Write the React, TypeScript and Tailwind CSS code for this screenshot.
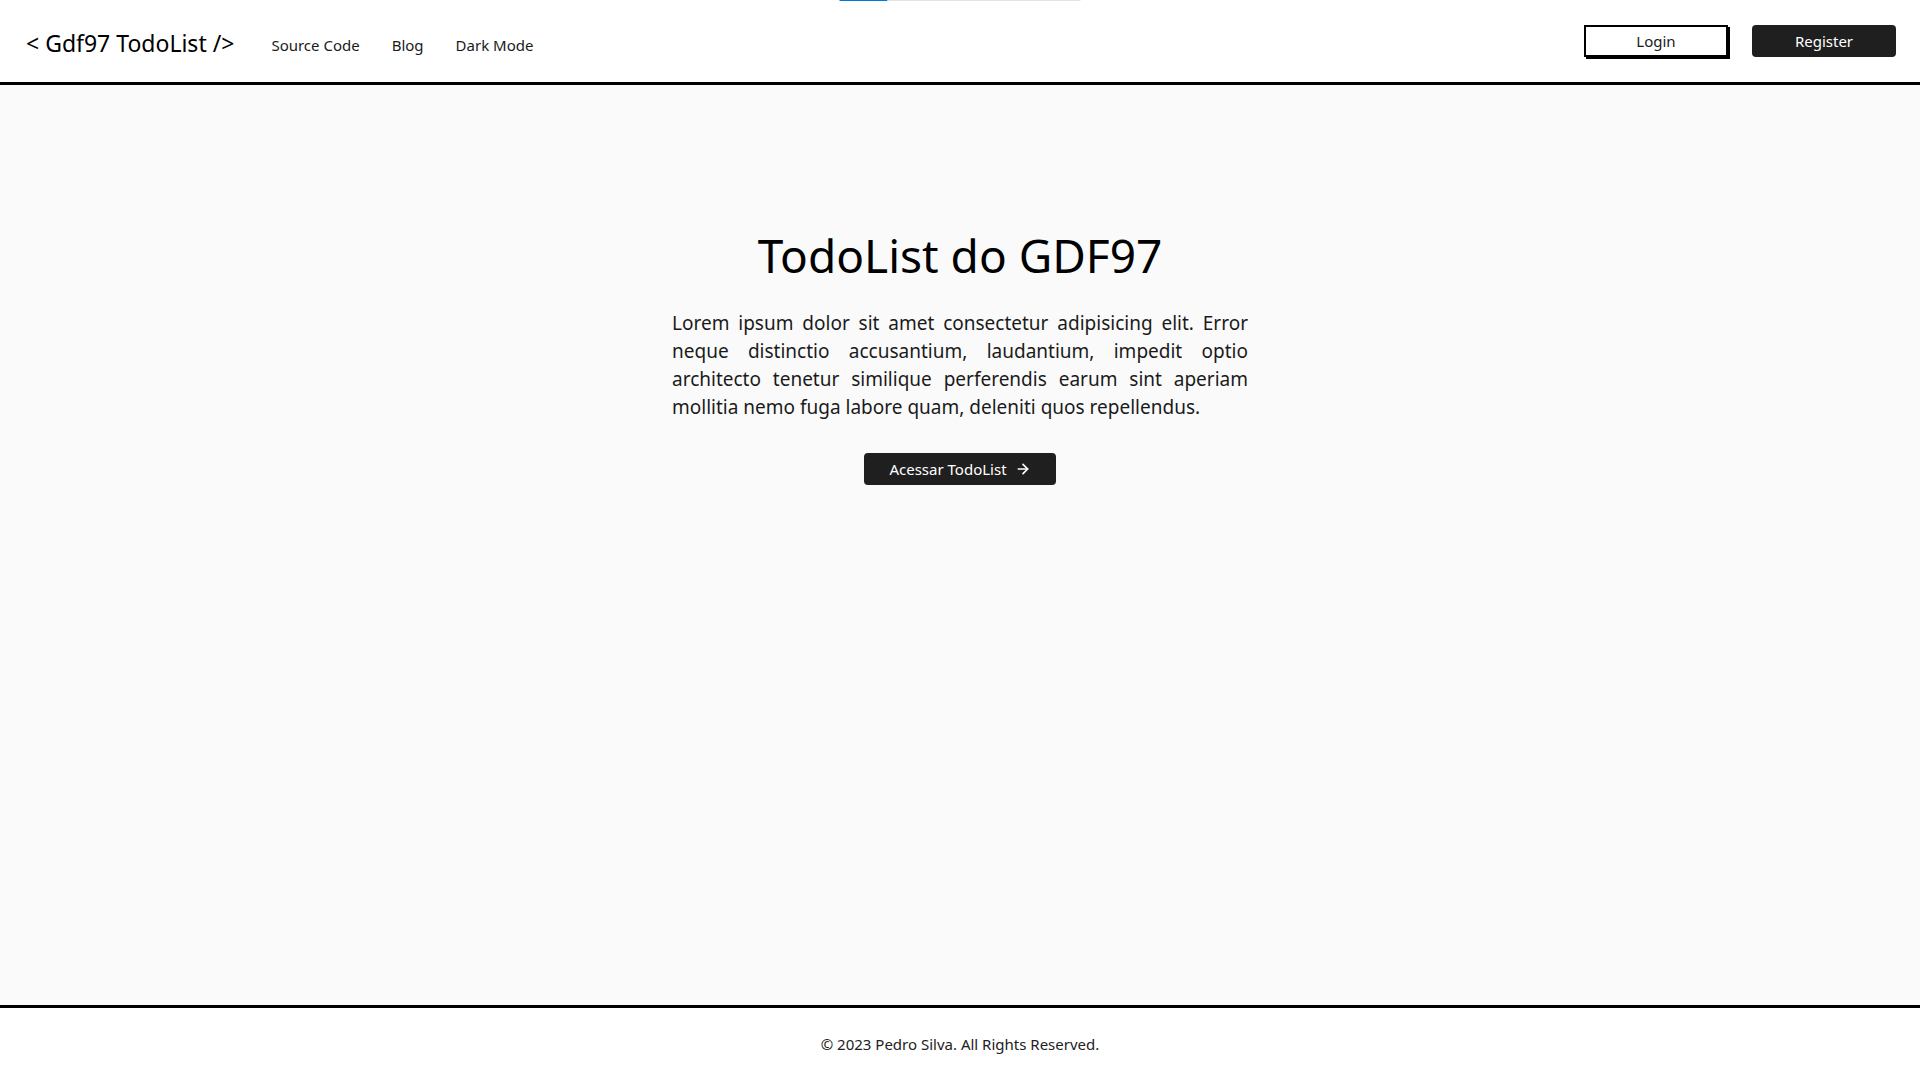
import React from "react";
import { ArrowRight } from "lucide-react";

export default function App() {
  return (
    <div className="relative flex min-h-screen w-[1920px] flex-col bg-white text-[#111] font-['Noto_Sans','Open_Sans',sans-serif]">
      <div className="absolute left-1/2 top-0 flex h-[1px] w-[241px] -translate-x-1/2">
        <div className="h-full w-[48px] bg-[#0078d4]" />
        <div className="h-full flex-1 bg-[#e3e3e3]" />
      </div>

      <header className="flex h-[85px] items-center justify-between border-b-[3px] border-black bg-white px-6">
        <div className="mt-[4px] flex items-baseline">
          <span className="pl-[2px] text-[23px] leading-8 text-black">&lt; Gdf97 TodoList /&gt;</span>
          <nav className="ml-[37px] flex -translate-y-px items-baseline gap-8 text-[15px] text-[#1a1a1a]">
            <a href="#">Source Code</a>
            <a href="#">Blog</a>
            <a href="#">Dark Mode</a>
          </nav>
        </div>
        <div className="flex items-center gap-6">
          <button className="h-8 w-36 border-2 border-black bg-white text-[15px] text-[#1a1a1a] shadow-[2px_2px_0_0_#000]">
            Login
          </button>
          <button className="h-8 w-36 rounded bg-[#1f1f1f] text-[15px] text-white">
            Register
          </button>
        </div>
      </header>

      <main className="flex flex-1 flex-col items-center bg-[#fafafa] pt-[146px]">
        <h1 className="text-[46px] leading-[48px] text-black">TodoList do GDF97</h1>
        <p className="mt-[30px] w-[576px] text-justify text-[19px] leading-7 text-[#1a1a1a]">
          Lorem ipsum dolor sit amet consectetur adipisicing elit. Error neque distinctio
          accusantium, laudantium, impedit optio architecto tenetur similique perferendis
          earum sint aperiam mollitia nemo fuga labore quam, deleniti quos repellendus.
        </p>
        <button className="mt-8 flex h-8 w-48 items-center justify-center gap-2 rounded bg-[#1f1f1f] text-[15px] text-white">
          Acessar TodoList
          <ArrowRight size={16} strokeWidth={2.5} />
        </button>
      </main>

      <footer className="flex h-[75px] items-center justify-center border-t-[3px] border-black bg-white text-[15px] text-[#222]">
        © 2023 Pedro Silva. All Rights Reserved.
      </footer>
    </div>
  );
}
